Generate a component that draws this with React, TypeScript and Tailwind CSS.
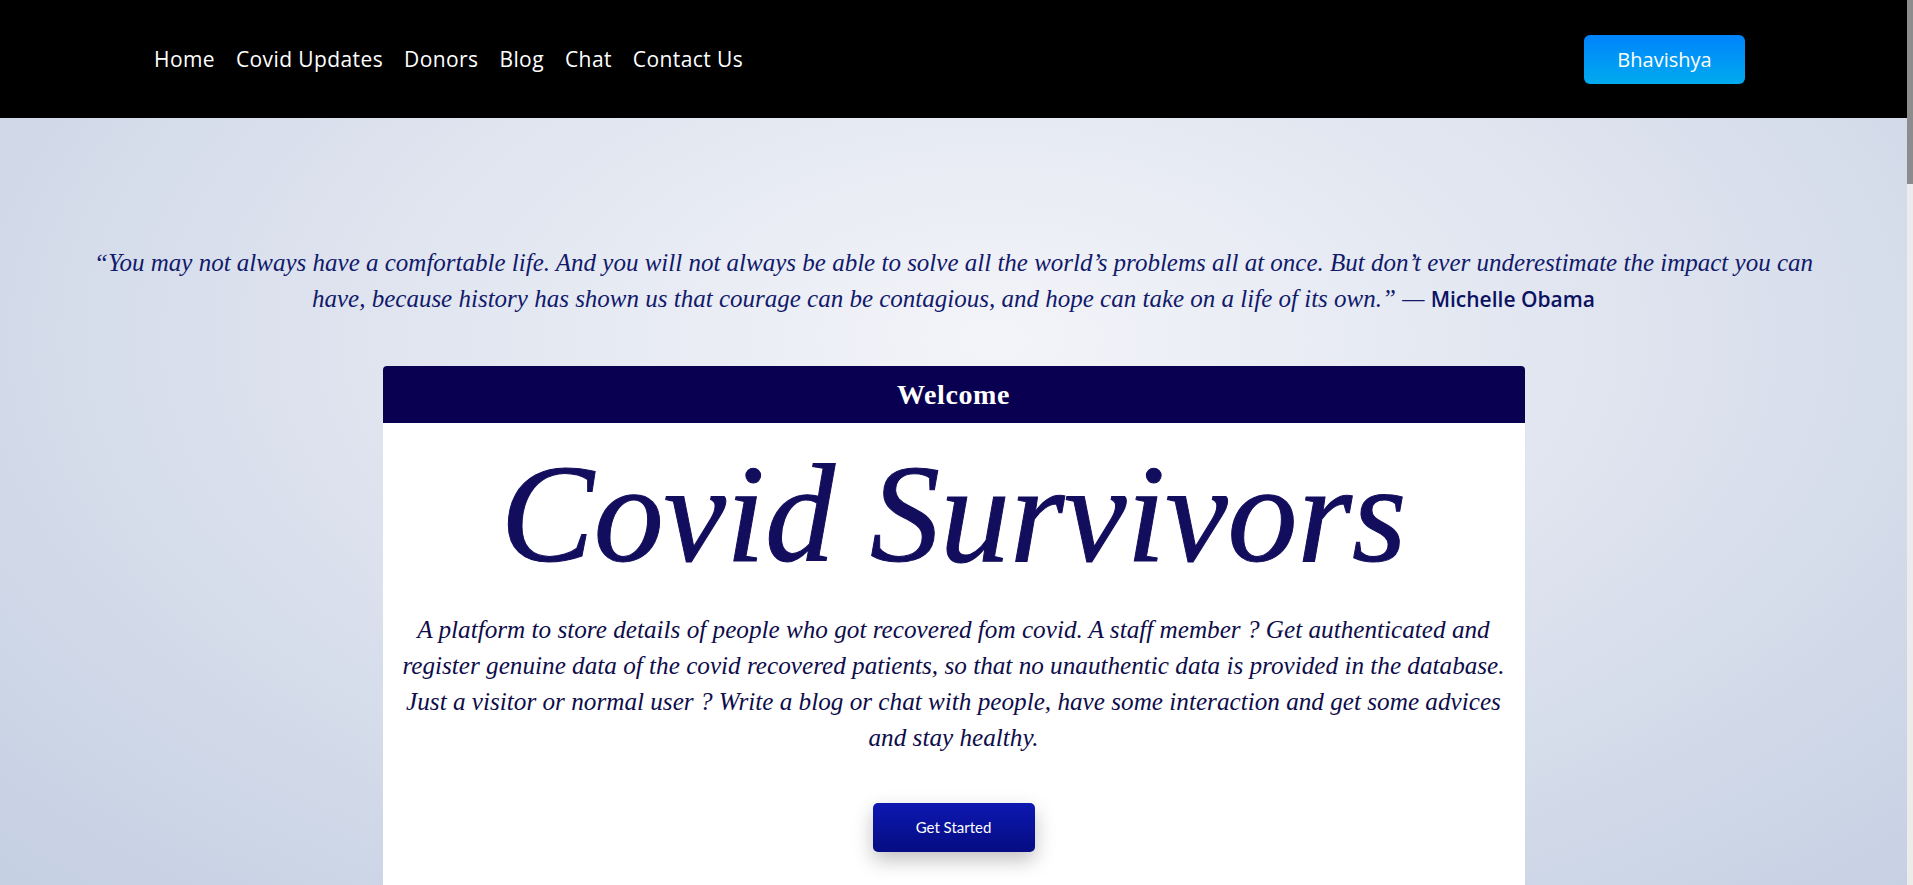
const navLinks = ["Home", "Covid Updates", "Donors", "Blog", "Chat", "Contact Us"];

const Navbar = () => {
    return (
        <nav className="bg-black h-[118px] flex items-center justify-between pl-[154px] pr-[168px]">
            <ul className="flex items-center gap-[21px] mt-[1px]">
                {navLinks.map((label) => (
                    <li key={label} className="list-none">
                        <a href="#" className="text-white text-[21px] font-['Open_Sans',sans-serif] tracking-[0.4px]">
                            {label}
                        </a>
                    </li>
                ))}
            </ul>
            <button
                className="w-[161px] h-[49px] rounded-[6px] bg-gradient-to-b from-[#0083fc] to-[#00aaee] text-white text-[20px] font-['Open_Sans',sans-serif] mt-[1px]">
                Bhavishya
            </button>
        </nav>
    );
};

const Quote = () => {
    return (
        <p className="text-center text-[#111a6b] italic text-[25px] leading-[36px] font-['Liberation_Serif',serif] px-[78px]">
            “You may not always have a comfortable life. And you will not always be able to solve all the world’s
            problems all at once. But don’t ever underestimate the impact you can have, because history has shown us
            that courage can be contagious, and hope can take on a life of its own.” —{" "}
            <span className="not-italic font-['Open_Sans',sans-serif] text-[21px] font-semibold text-[#0c1262]">
                Michelle Obama
            </span>
        </p>
    );
};

const WelcomeCard = () => {
    return (
        <div className="w-[1142px] mx-auto mt-[49px] bg-white rounded-t-[4px] overflow-hidden">
            {/* header */}
            <div className="bg-[#0a0052] h-[57px] flex items-center justify-center">
                <h3 className="text-white text-[28px] font-bold tracking-[0.6px] font-['Liberation_Serif',serif]">Welcome</h3>
            </div>

            <div className="flex flex-col items-center px-[16px]">
                <h1 className="text-[#120d5c] italic text-[140px] leading-none mt-[21px] font-['Liberation_Serif',serif] [-webkit-text-stroke:1px_#120d5c]">
                    Covid Survivors
                </h1>
                <p className="text-center text-[#0e0d4a] italic text-[25.2px] leading-[36px] mt-[28px] font-['Liberation_Serif',serif]">
                    A platform to store details of people who got recovered fom covid. A staff member ? Get authenticated
                    and register genuine data of the covid recovered patients, so that no unauthentic data is provided
                    in the database. Just a visitor or normal user ? Write a blog or chat with people, have some
                    interaction and get some advices and stay healthy.
                </p>
                <button
                    className="mt-[47px] mb-[40px] w-[162px] h-[49px] rounded-[5px] bg-gradient-to-b from-[#0d18b2] to-[#060c82] text-white text-[15px] font-['Lato',sans-serif] shadow-[0_8px_20px_rgba(0,0,0,0.25)]">
                    Get Started
                </button>
            </div>
        </div>
    );
};

export default function App() {
    return (
        <div
            className="min-h-screen bg-[radial-gradient(ellipse_at_52%_38%,#f3f4f9_0%,#dfe4ef_45%,#c4cfe2_100%)]">
            <Navbar/>
            <main className="pt-[127px] pr-[6px]">
                <Quote/>
                <WelcomeCard/>
            </main>

            {/* thin scrollbar strip on the right */}
            <div className="fixed top-0 right-0 w-[6px] h-full bg-[#ececec]">
                <div className="w-full h-[184px] bg-[#8c8c8c]"/>
            </div>
        </div>
    );
}
